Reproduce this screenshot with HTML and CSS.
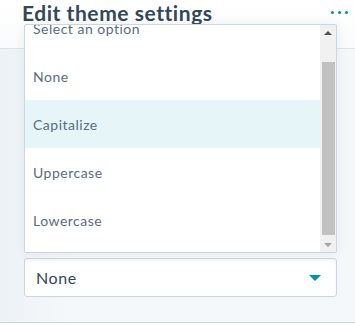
FILE: index.html
```html
<!DOCTYPE html>
<html>
<head>
<meta charset="utf-8">
<link rel="stylesheet" href="styles.css">
</head>
<body>
<div class="page">
  <header class="header">
    <h1 class="title">Edit theme settings</h1>
    <div class="more"><span></span><span></span><span></span></div>
  </header>
  <section class="panel">
    <div class="select">
      <span class="select-value">None</span>
      <span class="caret"></span>
    </div>
  </section>
  <div class="popup">
    <ul class="options">
      <li class="option">Select an option</li>
      <li class="option">None</li>
      <li class="option active">Capitalize</li>
      <li class="option">Uppercase</li>
      <li class="option">Lowercase</li>
    </ul>
    <div class="scrollbar">
      <div class="sb-btn up"><span class="tri-up"></span></div>
      <div class="sb-track"><div class="sb-thumb"></div></div>
      <div class="sb-btn down"><span class="tri-down"></span></div>
    </div>
  </div>
</div>
</body>
</html>
```
FILE: styles.css
```css
* { box-sizing: border-box; }
html, body { margin: 0; padding: 0; }
body {
  width: 355px;
  height: 325px;
  overflow: hidden;
  background: #fff;
  font-family: "Lato", "Noto Sans", sans-serif;
}
.page { position: relative; width: 355px; height: 325px; }
.header {
  height: 48px;
  display: flex;
  align-items: flex-start;
  justify-content: space-between;
  padding: 0 7px 0 22px;
  background: linear-gradient(180deg, #ffffff 0%, #fafbfc 100%);
}
.title {
  margin: 0;
  font-size: 21px;
  font-weight: 700;
  color: #33475b;
  line-height: 26px;
  letter-spacing: 0.55px;
}
.more { display: flex; gap: 4px; margin-top: 11px; }
.more span { width: 3px; height: 3px; border-radius: 50%; background: #0091ae; }
.panel {
  height: 275px;
  border-top: 1px solid #dbe3ec;
  border-bottom: 1px solid #cbd6e2;
  background: linear-gradient(90deg, #edf2f7 0%, #f5f8fa 20%, #f5f8fa 100%);
  padding: 209px 18px 0 24px;
}
.select {
  height: 39px;
  width: 313px;
  border: 1px solid #cbd6e2;
  border-radius: 3px;
  background: #fff;
  box-shadow: inset 0 2px 3px rgba(0,0,0,0.04);
  display: flex;
  align-items: center;
  justify-content: space-between;
  padding: 0 15px 0 11px;
}
.select-value { font-size: 16px; color: #33475b; letter-spacing: 0.6px; }
.caret {
  width: 0; height: 0;
  border-left: 6px solid transparent;
  border-right: 6px solid transparent;
  border-top: 6px solid #0091ae;
}
.popup {
  position: absolute;
  left: 24px;
  top: 24px;
  width: 313px;
  height: 229px;
  border: 1px solid #cbd6e2;
  border-radius: 2px;
  background: #fff;
  display: flex;
  overflow: hidden;
  box-shadow: 0 1px 12px rgba(45,62,80,0.08);
}
.options {
  list-style: none;
  margin: 0;
  padding: 0;
  flex: 1;
  overflow: hidden;
}
.option {
  height: 48px;
  display: flex;
  align-items: center;
  padding-left: 8px;
  font-size: 14px;
  letter-spacing: 0.5px;
  color: #5a6c80;
}
.option:first-child { margin-top: -21px; }
.option.active { background: #e5f5f8; }
.scrollbar {
  width: 16px;
  background: #f1f1f1;
  display: flex;
  flex-direction: column;
}
.sb-btn { height: 15px; display: flex; align-items: center; justify-content: center; }
.sb-track { flex: 1; padding: 22px 1px 1px 2px; }
.sb-thumb { height: 173px; background: #c1c1c1; }
.tri-up {
  width: 0; height: 0;
  border-left: 4px solid transparent;
  border-right: 4px solid transparent;
  border-bottom: 4px solid #505050;
}
.tri-down {
  width: 0; height: 0;
  border-left: 4px solid transparent;
  border-right: 4px solid transparent;
  border-top: 4px solid #a3a3a3;
}
```
